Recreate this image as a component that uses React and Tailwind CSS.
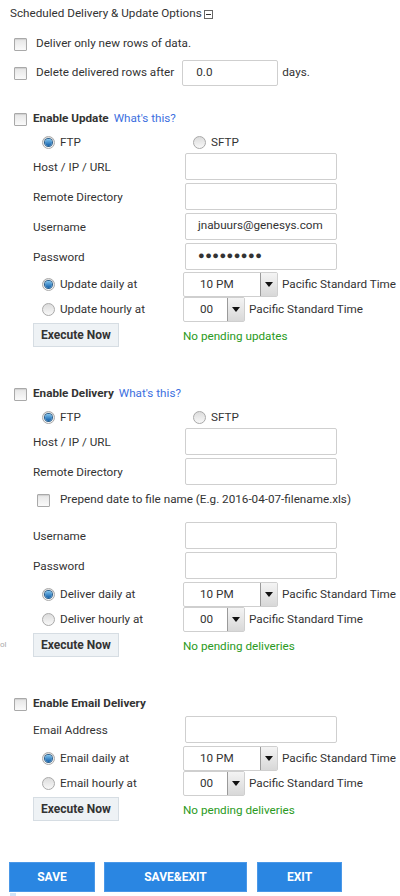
import React from "react";

const Checkbox = () => (
  <span className="inline-block w-[13px] h-[13px] shrink-0 border border-[#a9a9a9] rounded-[1px] bg-gradient-to-b from-[#e6e6e6] to-[#fafafa] shadow-[inset_0_1px_1px_rgba(0,0,0,0.1)]" />
);

const Radio = ({ checked }) => (
  <span className="inline-flex items-center justify-center w-[13px] h-[13px] shrink-0 rounded-full border border-[#a9a9a9] bg-gradient-to-b from-[#dcdcdc] to-[#f8f8f8]">
    {checked && (
      <span className="block w-[7px] h-[7px] rounded-full bg-gradient-to-b from-[#7cc4f0] to-[#0b5ea8] shadow-[0_0_0_1px_#2b5f8c]" />
    )}
  </span>
);

const TextInput = ({ value, dots, w = "w-[152px]" }) => (
  <div className={`${w} h-[27px] border border-[#cfcfcf] rounded-[2px] bg-white flex items-center pl-[12px] text-[#333]`}>
    {dots ? <span className="tracking-[0.5px] text-[11px]">●●●●●●●●●</span> : value}
  </div>
);

const Select = ({ value, w }) => (
  <div className={`${w} h-[25px] border border-[#cfcfcf] rounded-[2px] bg-white flex items-stretch`}>
    <div className="flex-1 flex items-center pl-[16px] text-[#333]">{value}</div>
    <div className="w-[17px] border-l border-[#9a9a9a] bg-gradient-to-b from-[#f4f4f4] to-[#d8d8d8] flex items-center justify-center">
      <span className="block w-0 h-0 border-l-[4px] border-r-[4px] border-t-[5px] border-l-transparent border-r-transparent border-t-[#111]" />
    </div>
  </div>
);

const FieldRow = ({ label, children }) => (
  <div className="flex items-center h-[30px] pl-[23px]">
    <div className="w-[152px] pt-[4px]">{label}</div>
    {children}
  </div>
);

const ScheduleRow = ({ label, checked, value, w }) => (
  <div className="flex items-center h-[25px] pl-[32px]">
    <div className="w-[141px] flex items-center gap-[5px]">
      <Radio checked={checked} />
      <span className="pt-[1px]">{label}</span>
    </div>
    <Select value={value} w={w} />
    <span className="ml-[4px]">Pacific Standard Time</span>
  </div>
);

const ExecuteRow = ({ status, stray }) => (
  <div className="relative flex items-center h-[25px] pl-[23px]">
    {stray && <span className="absolute left-[-10px] top-[7px] text-[8px] text-[#aaa]">ol</span>}
    <button className="w-[86px] h-[24px] border border-[#d6dde3] bg-[#eef2f5] text-[#333] font-bold text-[12px]">
      Execute Now
    </button>
    <span className="ml-[64px] mt-[4px] text-[#2a9a22]">{status}</span>
  </div>
);

const SectionHead = ({ title, help }) => (
  <div className="flex items-center h-[20px] pl-[4px] gap-[6px]">
    <Checkbox />
    <span className="font-bold text-[#333]">{title}</span>
    {help && <span className="text-[#3d6fe0] ml-[-1px]">What's this?</span>}
  </div>
);

const Protocol = () => (
  <div className="flex items-center h-[17px] mt-[5px] pl-[32px]">
    <div className="w-[151px] flex items-center gap-[5px]">
      <Radio checked />
      <span>FTP</span>
    </div>
    <Radio />
    <span className="ml-[5px]">SFTP</span>
  </div>
);

const App = () => {
  return (
    <div className="w-[400px] h-[896px] overflow-hidden bg-white text-[11.7px] text-[#333] pl-[10px] font-['Roboto','Liberation_Sans',sans-serif]">
      {/* header */}
      <div className="flex items-center h-[28px] gap-[2px]">
        <span>Scheduled Delivery &amp; Update Options</span>
        <span className="w-[9px] h-[9px] border border-[#666] flex items-center justify-center mt-[1px]">
          <span className="block w-[5px] h-[1px] bg-[#333]" />
        </span>
      </div>

      <div className="flex items-center h-[20px] mt-[6px] pl-[4px] gap-[9px]">
        <Checkbox />
        <span>Deliver only new rows of data.</span>
      </div>
      <div className="flex items-center h-[26px] mt-[6px] pl-[4px]">
        <Checkbox />
        <span className="ml-[9px]">Delete delivered rows after</span>
        <div className="ml-[8px] w-[96px] h-[26px] border border-[#cfcfcf] rounded-[2px] flex items-center pl-[13px]">0.0</div>
        <span className="ml-[4px]">days.</span>
      </div>

      {/* update */}
      <div className="mt-[23px]">
        <SectionHead title="Enable Update" help />
        <Protocol />
        <FieldRow label="Host / IP / URL"><TextInput /></FieldRow>
        <FieldRow label="Remote Directory"><TextInput /></FieldRow>
        <FieldRow label="Username"><TextInput value="jnabuurs@genesys.com" /></FieldRow>
        <FieldRow label="Password"><TextInput dots /></FieldRow>
        <div className="mt-[1px]">
          <ScheduleRow label="Update daily at" checked value="10 PM" w="w-[95px]" />
          <ScheduleRow label="Update hourly at" value="00" w="w-[62px]" />
        </div>
        <ExecuteRow status="No pending updates" />
      </div>

      {/* delivery */}
      <div className="mt-[37px]">
        <SectionHead title="Enable Delivery" help />
        <Protocol />
        <FieldRow label="Host / IP / URL"><TextInput /></FieldRow>
        <FieldRow label="Remote Directory"><TextInput /></FieldRow>
        <div className="flex items-center h-[20px] mt-[4px] pl-[27px] gap-[10px]">
          <Checkbox />
          <span>Prepend date to file name (E.g. 2016-04-07-filename.xls)</span>
        </div>
        <div className="mt-[10px]">
          <FieldRow label="Username"><TextInput /></FieldRow>
          <FieldRow label="Password"><TextInput /></FieldRow>
        </div>
        <div className="mt-[2px]">
          <ScheduleRow label="Deliver daily at" checked value="10 PM" w="w-[95px]" />
          <ScheduleRow label="Deliver hourly at" value="00" w="w-[62px]" />
        </div>
        <ExecuteRow status="No pending deliveries" stray />
      </div>

      {/* email */}
      <div className="mt-[37px]">
        <SectionHead title="Enable Email Delivery" />
        <FieldRow label="Email Address"><TextInput /></FieldRow>
        <div className="mt-[2px]">
          <ScheduleRow label="Email daily at" checked value="10 PM" w="w-[95px]" />
          <ScheduleRow label="Email hourly at" value="00" w="w-[62px]" />
        </div>
        <ExecuteRow status="No pending deliveries" />
      </div>

      {/* actions */}
      <div className="flex mt-[41px] -ml-[1px]">
        <button className="w-[86px] h-[30px] bg-[#2a86e2] border border-[#4a98e8] text-white font-bold text-[12px]">SAVE</button>
        <button className="w-[143px] h-[30px] ml-[9px] bg-[#2a86e2] border border-[#4a98e8] text-white font-bold text-[12px]">SAVE&amp;EXIT</button>
        <button className="w-[85px] h-[30px] ml-[10px] bg-[#2a86e2] border border-[#4a98e8] text-white font-bold text-[12px]">EXIT</button>
      </div>
      <div className="w-[6px] h-[4px] mt-[1px] bg-[#cfe3f7]" />
    </div>
  );
};

export default App;
